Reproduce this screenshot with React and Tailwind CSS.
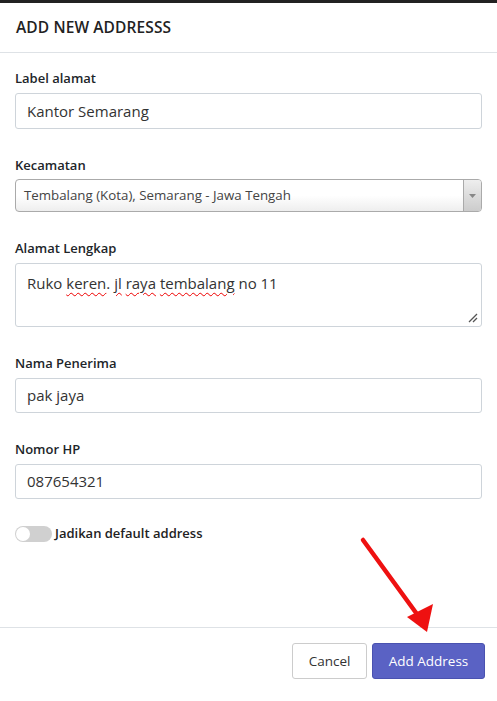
export default function App() {
  const font = { fontFamily: '"Open Sans", "Noto Sans", sans-serif' };
  const sq = "underline decoration-wavy decoration-[#e00] decoration-1 underline-offset-[3px]";
  return (
    <div className="relative w-[497px] h-[701px] bg-white border-t-[3px] border-[#222] text-[#212529] overflow-hidden" style={font}>
      <div className="h-[50px] flex items-center px-4 border-b border-[#dee2e6]">
        <h1 className="text-[15.5px] font-semibold tracking-[0.1px] text-[#222]">ADD NEW ADDRESSS</h1>
      </div>
      <div className="px-[15px] pt-[16px] h-[574px]">
        <div className="text-[13px] font-semibold leading-[18px] mb-[6px]">Label alamat</div>
        <div className="h-[36px] border border-[#ced4da] rounded-[3px] flex items-center px-[11px] text-[15px] text-[#333]">Kantor Semarang</div>

        <div className="text-[13px] font-semibold leading-[18px] mt-[27px] mb-[5px]">Kecamatan</div>
        <div className="h-[33px] border border-[#aaa] rounded-[4px] flex overflow-hidden bg-gradient-to-b from-white from-50% to-[#eee]">
          <div className="flex-1 flex items-center px-[8px] text-[13.3px] text-[#444]">Tembalang (Kota), Semarang - Jawa Tengah</div>
          <div className="w-[18px] border-l border-[#aaa] bg-gradient-to-b from-[#eee] to-[#ccc] flex items-center justify-center">
            <svg width="7" height="4" viewBox="0 0 7 4"><path d="M0 0 L7 0 L3.5 4 Z" fill="#888" /></svg>
          </div>
        </div>

        <div className="text-[13px] font-semibold leading-[18px] mt-[27px] mb-[6px]">Alamat Lengkap</div>
        <div className="relative h-[64px] border border-[#ced4da] rounded-[3px] px-[11px] pt-[8px] text-[15px] text-[#333]">
          Ruko <span className={sq}>keren</span>. <span className={sq}>jl</span> <span className={sq}>raya</span> <span className={sq}>tembalang</span> no 11
          <svg className="absolute right-[3px] bottom-[3px]" width="10" height="10" viewBox="0 0 10 10">
            <path d="M1 9 L9 1 M5 9 L9 5" stroke="#555" strokeWidth="1.3" />
          </svg>
        </div>

        <div className="text-[13px] font-semibold leading-[18px] mt-[27px] mb-[6px]">Nama Penerima</div>
        <div className="h-[35px] border border-[#ced4da] rounded-[3px] flex items-center px-[11px] text-[15px] text-[#333]">pak jaya</div>

        <div className="text-[13px] font-semibold leading-[18px] mt-[27px] mb-[6px]">Nomor HP</div>
        <div className="h-[35px] border border-[#ced4da] rounded-[3px] flex items-center px-[11px] text-[15px] text-[#333]">087654321</div>

        <div className="flex items-center mt-[25px]">
          <div className="relative w-[37px] h-[16px] rounded-full bg-[#d0d0d0]">
            <div className="absolute left-[1px] top-[1px] w-[14px] h-[14px] rounded-full bg-white"></div>
          </div>
          <span className="ml-[3px] text-[13px] font-semibold text-[#222]">Jadikan default address</span>
        </div>
      </div>
      <div className="border-t border-[#dee2e6] flex justify-end items-center gap-[5px] px-[12px] pt-[15px]">
        <button className="h-[36px] w-[75px] rounded-[3px] border border-[#ccc] bg-white text-[13.5px] text-[#333]">Cancel</button>
        <button className="h-[36px] w-[113px] rounded-[3px] border border-[#4a52b0] bg-[#5a62c4] text-[13.5px] text-white">Add Address</button>
      </div>
      <svg className="absolute left-0 top-0 pointer-events-none" width="497" height="701" viewBox="0 0 497 701">
        <line x1="363" y1="537" x2="422" y2="618" stroke="#ee1111" strokeWidth="4.5" strokeLinecap="round" />
        <path d="M427 629 L407 614 L433 601 Z" fill="#ee1111" />
      </svg>
    </div>
  );
}
